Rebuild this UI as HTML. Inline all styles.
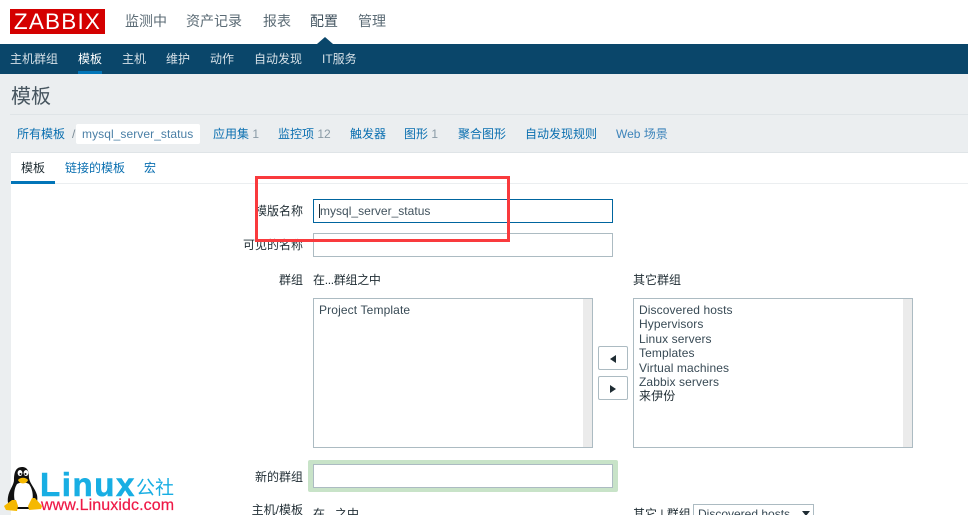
<!DOCTYPE html>
<html><head><meta charset="utf-8">
<style>
html,body{margin:0;padding:0;width:968px;height:515px;overflow:hidden}
body{background:#fff;font-family:"Liberation Sans","Noto Sans CJK SC",sans-serif;}
#w{position:relative;width:968px;height:515px;overflow:hidden;background:#fff}
.a{position:absolute}
.t{position:absolute;white-space:nowrap;font-size:12px;line-height:16px}
.n{font-size:14px;line-height:20px;top:11px;color:#5b6b75}
.s{font-size:12px;line-height:16px;top:51px;color:#d5e0e7}
.l{color:#0a6fb0;top:126px}
.g{color:#7a8a95}
.r{color:#1f2c33;text-align:right;width:100px}
.b{position:absolute;box-sizing:border-box;border:1px solid #acbbc2;background:#fff}
.o{color:#384a55;left:639px;letter-spacing:.1px}
</style></head><body><div id="w">
<div class="a" style="left:10px;top:9px;width:95px;height:25px;background:#d40000"></div>
<div class="t" style="left:10px;top:9px;width:95px;height:25px;line-height:26px;font-size:22.5px;color:#fff;text-align:center;letter-spacing:1.2px">ZABBIX</div>
<div class="t n" style="left:125px">监测中</div>
<div class="t n" style="left:186px">资产记录</div>
<div class="t n" style="left:263px">报表</div>
<div class="t n" style="left:310px;color:#40525e">配置</div>
<div class="t n" style="left:358px">管理</div>
<div class="a" style="left:0;top:44px;width:968px;height:30px;background:#0a466a"></div>
<div class="a" style="left:317px;top:37px;width:0;height:0;border-left:8px solid transparent;border-right:8px solid transparent;border-bottom:7px solid #0a466a"></div>
<div class="t s" style="left:10px">主机群组</div>
<div class="t s" style="left:78px;color:#fff">模板</div>
<div class="a" style="left:78px;top:71px;width:24px;height:3px;background:#0275b8"></div>
<div class="t s" style="left:122px">主机</div>
<div class="t s" style="left:166px">维护</div>
<div class="t s" style="left:210px">动作</div>
<div class="t s" style="left:254px">自动发现</div>
<div class="t s" style="left:322px">IT服务</div>

<div class="a" style="left:0;top:74px;width:968px;height:441px;background:#ebeef0"></div>
<div class="t" style="left:11px;top:85px;font-size:20px;line-height:25px;color:#47555f">模板</div>
<div class="a" style="left:10px;top:114px;width:958px;height:1px;background:#dfe4e7"></div>

<div class="t l" style="left:17px">所有模板</div>
<div class="t g" style="left:72px;top:126px">/</div>
<div class="a" style="left:76px;top:124px;width:124px;height:20px;background:#fff;border-radius:2px"></div>
<div class="t" style="left:82px;top:126px;color:#4a7fa6;font-size:12px;letter-spacing:.07px">mysql_server_status</div>
<div class="t l" style="left:213px">应用集 <span style="color:#8a9aa5">1</span></div>
<div class="t l" style="left:278px">监控项 <span style="color:#8a9aa5">12</span></div>
<div class="t l" style="left:350px">触发器</div>
<div class="t l" style="left:404px">图形 <span style="color:#8a9aa5">1</span></div>
<div class="t l" style="left:458px">聚合图形</div>
<div class="t l" style="left:525px">自动发现规则</div>
<div class="t l" style="left:616px;color:#3d84ba">Web 场景</div>

<div class="a" style="left:11px;top:153px;width:957px;height:362px;background:#fff"></div>
<div class="a" style="left:11px;top:152px;width:957px;height:1px;background:#dfe4e7"></div>
<div class="a" style="left:11px;top:183px;width:957px;height:1px;background:#ebeef0"></div>
<div class="a" style="left:11px;top:181px;width:44px;height:3px;background:#0275b8"></div>
<div class="t" style="left:21px;top:160px;color:#1f2c33">模板</div>
<div class="t" style="left:65px;top:160px;color:#0a6fb0">链接的模板</div>
<div class="t" style="left:144px;top:160px;color:#0a6fb0">宏</div>

<div class="t r" style="left:203px;top:203px">模版名称</div>
<div class="b" style="left:313px;top:199px;width:300px;height:24px;border-color:#00659f"></div>
<div class="a" style="left:319px;top:204px;width:1px;height:14px;background:#1f2c33"></div>
<div class="t" style="left:320px;top:203px;color:#41525d;font-size:12px;letter-spacing:.02px">mysql_server_status</div>

<div class="t r" style="left:203px;top:237px">可见的名称</div>
<div class="b" style="left:313px;top:233px;width:300px;height:24px"></div>

<div class="t r" style="left:203px;top:272px">群组</div>
<div class="t" style="left:313px;top:272px;color:#1f2c33;letter-spacing:-.3px">在...群组之中</div>
<div class="t" style="left:633px;top:272px;color:#1f2c33">其它群组</div>

<div class="b" style="left:313px;top:298px;width:280px;height:150px"></div>
<div class="a" style="left:583px;top:299px;width:9px;height:148px;background:#ebebeb"></div>
<div class="t" style="left:319px;top:302px;color:#384a55;letter-spacing:.13px">Project Template</div>

<div class="b" style="left:633px;top:298px;width:280px;height:150px"></div>
<div class="a" style="left:903px;top:299px;width:9px;height:148px;background:#ebebeb"></div>
<div class="t o" style="top:302px">Discovered hosts</div>
<div class="t o" style="top:316px">Hypervisors</div>
<div class="t o" style="top:331px">Linux servers</div>
<div class="t o" style="top:345px">Templates</div>
<div class="t o" style="top:360px">Virtual machines</div>
<div class="t o" style="top:374px">Zabbix servers</div>
<div class="t o" style="top:388px;color:#1f2c33">来伊份</div>

<div class="b" style="left:598px;top:346px;width:30px;height:24px;border-radius:2px"></div>
<div class="a" style="left:610px;top:355px;width:0;height:0;border-top:4px solid transparent;border-bottom:4px solid transparent;border-right:6px solid #1f2c33"></div>
<div class="b" style="left:598px;top:376px;width:30px;height:24px;border-radius:2px"></div>
<div class="a" style="left:610px;top:385px;width:0;height:0;border-top:4px solid transparent;border-bottom:4px solid transparent;border-left:6px solid #1f2c33"></div>

<div class="t r" style="left:203px;top:469px">新的群组</div>
<div class="a" style="left:308px;top:460px;width:310px;height:32px;background:#c8e3c8;border-radius:2px"></div>
<div class="b" style="left:313px;top:464px;width:300px;height:24px"></div>

<div class="t r" style="left:203px;top:502px">主机/模板</div>
<div class="t" style="left:313px;top:506px;color:#1f2c33">在...之中</div>
<div class="t" style="left:633px;top:506px;color:#1f2c33">其它 | 群组</div>
<div class="b" style="left:693px;top:504px;width:121px;height:24px"></div>
<div class="t" style="left:698px;top:506px;color:#384a55">Discovered hosts</div>
<div class="a" style="left:802px;top:511px;width:0;height:0;border-left:4px solid transparent;border-right:4px solid transparent;border-top:5px solid #1f2c33"></div>

<div class="a" style="left:255px;top:176px;width:255px;height:66px;box-sizing:border-box;border:3px solid #f93a3d"></div>

<svg class="a" style="left:0;top:460px" width="46" height="55" viewBox="0 0 46 55">
<path d="M22 7C15 7 14 14 14 20C14 25 9 30 8 37C7 43 9 47 12 49L33 49C37 45 38 40 37 35C35 28 30 24 29 18C29 12 28 7 22 7Z" fill="#111"/>
<path d="M17 24C13 30 13 42 18 47L29 47C34 42 34 31 29 24C26 22 20 22 17 24Z" fill="#fff"/>
<ellipse cx="20" cy="13" rx="2.4" ry="3" fill="#fff"/><ellipse cx="26" cy="13" rx="2.400" ry="3" fill="#fff"/>
<circle cx="20.500" cy="14" r="1" fill="#111"/><circle cx="25.500" cy="14" r="1" fill="#111"/>
<path d="M18 20C20 17 26 17 28 20C27 24 20 25 18 20Z" fill="#f5b800"/>
<path d="M12 40L4 46L6 50L17 51L18 46L16 40Z" fill="#f5b800"/>
<path d="M32 38L28 46L29 50L41 49L42 46L35 38Z" fill="#f5b800"/>
</svg>
<div class="t" style="left:40px;top:466px;font-size:33px;line-height:38px;font-weight:bold;color:#18aee3;letter-spacing:1.6px;-webkit-text-stroke:.6px #18aee3">Linux</div>
<div class="t" style="left:136px;top:478px;font-size:19px;line-height:22px;color:#18aee3">公社</div>
<div class="t" style="left:41px;top:497px;font-size:16px;line-height:17px;color:#ee1846;letter-spacing:.1px;-webkit-text-stroke:.2px #ee1846">www.Linuxidc.com</div>
</div></body></html>
